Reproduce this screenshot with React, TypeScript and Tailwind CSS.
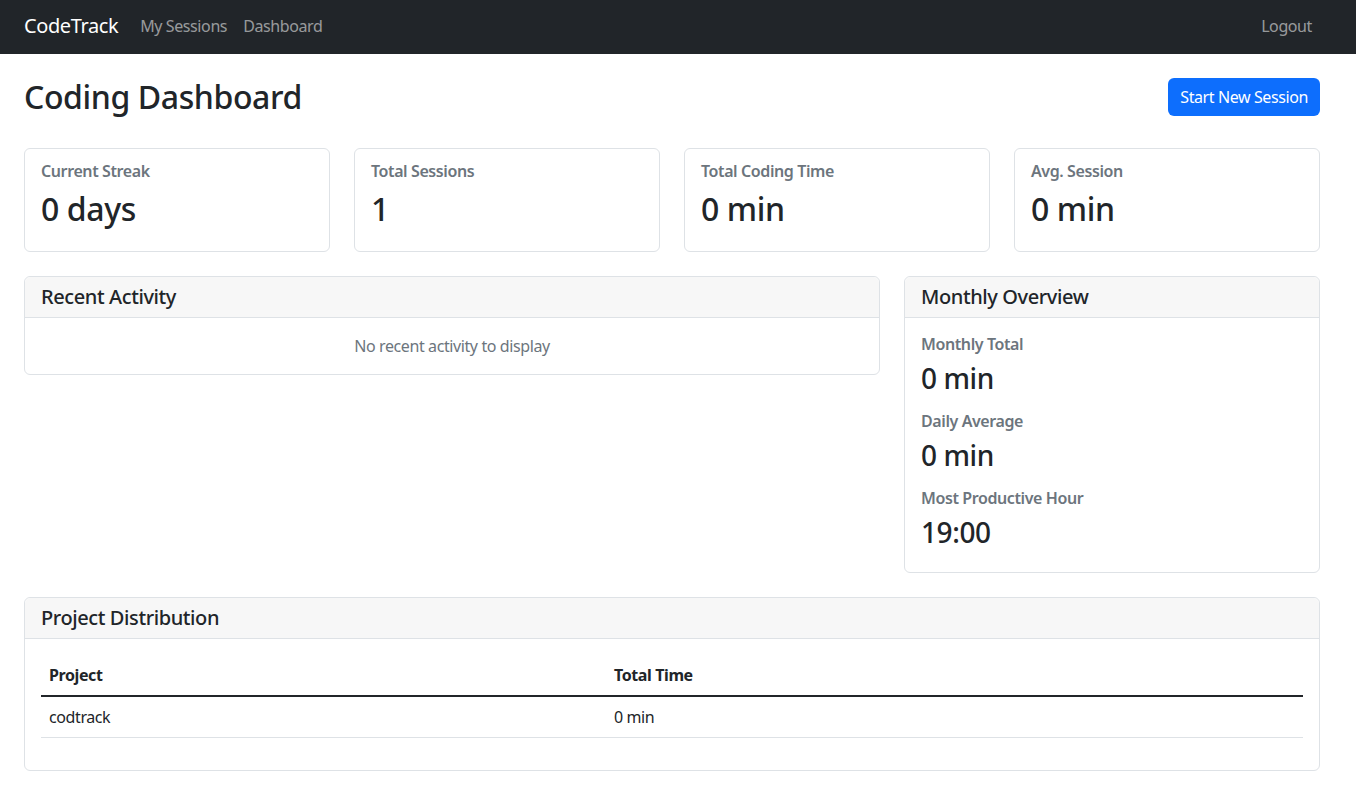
const font = "font-['Segoe_UI','Noto_Sans','Open_Sans',sans-serif] tracking-[-0.025em]";

const StatCard = ({ label, value }: { label: string; value: string }) => (
  <div className="flex-1 rounded-md border border-[#dee2e6] bg-white px-4 pt-[13px] pb-[23px]">
    <h6 className="mb-2 text-[16px] leading-[1.2] font-semibold text-[#6c757d]">{label}</h6>
    <h2 className="text-[32px] leading-[1.2] font-medium text-[#212529]">{value}</h2>
  </div>
);

const CardHeader = ({ title }: { title: string }) => (
  <div className="rounded-t-md border-b border-[#dee2e6] bg-[#f7f7f7] px-4 py-2">
    <h5 className="text-[20px] leading-[1.2] font-medium text-[#212529]">{title}</h5>
  </div>
);

const Metric = ({ label, value, last }: { label: string; value: string; last?: boolean }) => (
  <div className={last ? "" : "pb-2"}>
    <h6 className="mb-2 text-[16px] leading-[1.2] font-semibold text-[#6c757d]">{label}</h6>
    <h3 className="mb-2 text-[28px] leading-[1.2] font-medium text-[#212529]">{value}</h3>
  </div>
);

export default function App() {
  return (
    <div className={`${font} min-h-screen bg-white text-[16px] text-[#212529]`}>
      <nav className="h-[54px] bg-[#212529]">
        <div className="ml-6 flex h-full w-[1296px] items-center pb-[3px]">
          <span className="mr-[14px] text-[20px] text-white">CodeTrack</span>
          <a className="px-2 text-[rgba(255,255,255,0.55)]">My Sessions</a>
          <a className="px-2 text-[rgba(255,255,255,0.55)]">Dashboard</a>
          <a className="ml-auto px-2 text-[rgba(255,255,255,0.55)]">Logout</a>
        </div>
      </nav>

      <main className="ml-6 w-[1296px] pt-6">
        <div className="mb-8 flex items-center justify-between">
          <h1 className="text-[32px] leading-[1.2] font-medium">Coding Dashboard</h1>
          <button className="h-[38px] rounded-md bg-[#0d6efd] px-3 text-[16px] text-white">
            Start New Session
          </button>
        </div>

        <div className="mb-6 flex gap-6">
          <StatCard label="Current Streak" value="0 days" />
          <StatCard label="Total Sessions" value="1" />
          <StatCard label="Total Coding Time" value="0 min" />
          <StatCard label="Avg. Session" value="0 min" />
        </div>

        <div className="mb-6 flex items-start gap-6">
          <div className="w-[856px] rounded-md border border-[#dee2e6]">
            <CardHeader title="Recent Activity" />
            <div className="p-4 text-center leading-6 text-[#6c757d]">No recent activity to display</div>
          </div>
          <div className="flex-1 rounded-md border border-[#dee2e6]">
            <CardHeader title="Monthly Overview" />
            <div className="px-4 pt-[17px] pb-[15px]">
              <Metric label="Monthly Total" value="0 min" />
              <Metric label="Daily Average" value="0 min" />
              <Metric label="Most Productive Hour" value="19:00" last />
            </div>
          </div>
        </div>

        <div className="mb-6 rounded-md border border-[#dee2e6]">
          <CardHeader title="Project Distribution" />
          <div className="p-4">
            <table className="mb-4 w-full border-collapse text-left">
              <thead>
                <tr className="border-b-2 border-[#212529]">
                  <th className="w-[565px] p-2 leading-6 font-bold">Project</th>
                  <th className="p-2 leading-6 font-bold">Total Time</th>
                </tr>
              </thead>
              <tbody>
                <tr className="border-b border-[#dee2e6]">
                  <td className="p-2 leading-6">codtrack</td>
                  <td className="p-2 leading-6">0 min</td>
                </tr>
              </tbody>
            </table>
          </div>
        </div>
      </main>
    </div>
  );
}
